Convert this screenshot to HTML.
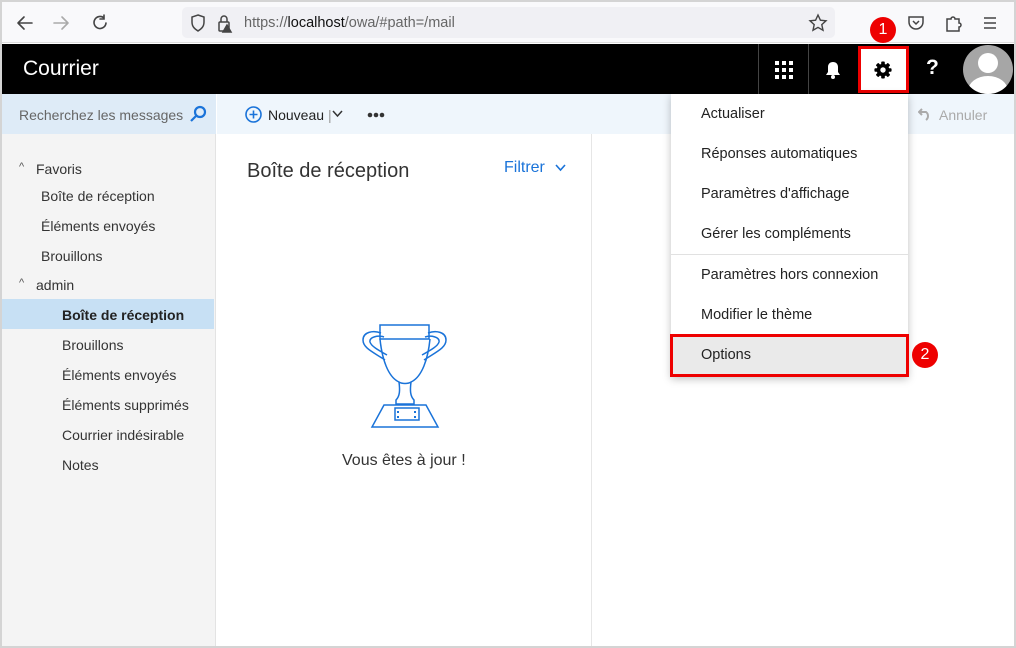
<!DOCTYPE html>
<html><head><meta charset="utf-8"><style>
*{margin:0;padding:0;box-sizing:border-box}
body{width:1016px;height:648px;overflow:hidden;background:#fff;font-family:"Liberation Sans",sans-serif;position:relative}
.a{position:absolute}
.t{font-size:14px;color:#333;white-space:nowrap}
.mi{position:absolute;left:701px;font-size:14.5px;color:#222;white-space:nowrap}
</style></head><body>
<div class="a" style="left:0;top:0;width:1016px;height:648px;border:2px solid #d4d4d4;border-top:none;z-index:20;pointer-events:none"></div>
<div class="a" style="left:0;top:0;width:1016px;height:43px;background:#f9f9fb;border-bottom:1px solid #ddd"></div>
<div class="a" style="left:0;top:0;width:1016px;height:2px;background:#d4d4d4"></div>
<svg class="a" style="left:14px;top:13px" width="100" height="20" viewBox="0 0 100 20" fill="none" stroke-width="1.6" stroke-linecap="round">
<path d="M4 10h14M4 10l6-6M4 10l6 6" stroke="#444"/>
<path d="M40 10h14M54 10l-6-6M54 10l-6 6" stroke="#aaa"/>
<path d="M90 5a6 6 0 1 0 2 5M90 2v4h-4" stroke="#444"/>
</svg>
<div class="a" style="left:182px;top:7px;width:653px;height:31px;background:#f0f0f4;border-radius:5px"></div>
<svg class="a" style="left:189px;top:13px" width="50" height="20" viewBox="0 0 50 20" fill="none" stroke="#444" stroke-width="1.5">
<path d="M9 2l6 2v5c0 5-3 7-6 9-3-2-6-4-6-9V4z"/>
<rect x="30" y="9" width="10" height="9" rx="1"/><path d="M32 9V6a3 3 0 0 1 6 0v3"/>
<path d="M38 12l4 7h-8z" fill="#444"/>
</svg>
<div class="a" style="left:244px;top:15px;font-size:14.5px;color:#666">https://<span style="color:#111">localhost</span>/owa/#path=/mail</div>
<svg class="a" style="left:808px;top:13px" width="20" height="20" viewBox="0 0 20 20" fill="none" stroke="#444" stroke-width="1.4"><path d="M10 2l2.4 5.2 5.6.6-4.2 3.8 1.2 5.6L10 14.4l-5 2.8 1.2-5.6L2 7.8l5.6-.6z"/></svg>
<svg class="a" style="left:907px;top:13px" width="95" height="20" viewBox="0 0 95 20" fill="none" stroke="#444" stroke-width="1.5">
<path d="M2 4h14v5a7 7 0 0 1-14 0z"/><path d="M6 8l3 3 3-3"/>
<path d="M40 6h4a2 2 0 1 1 4 0h4v4a2 2 0 1 1 0 4v4H40z"/>
<path d="M77 5h12M77 10h12M77 15h12"/>
</svg>
<div class="a" style="left:870px;top:17px;width:26px;height:26px;border-radius:50%;background:#e00;color:#fff;font-size:16px;text-align:center;line-height:26px;z-index:5">1</div>
<div class="a" style="left:0;top:44px;width:1016px;height:50px;background:#000"></div>
<div class="a" style="left:23px;top:57px;font-size:21px;color:#fff">Courrier</div>
<div class="a" style="left:758px;top:44px;width:1px;height:50px;background:#444"></div>
<div class="a" style="left:808px;top:44px;width:1px;height:50px;background:#444"></div>
<svg class="a" style="left:775px;top:61px" width="18" height="18" viewBox="0 0 18 18" fill="#fff"><rect x="0" y="0" width="4" height="4"/><rect x="7" y="0" width="4" height="4"/><rect x="14" y="0" width="4" height="4"/><rect x="0" y="7" width="4" height="4"/><rect x="7" y="7" width="4" height="4"/><rect x="14" y="7" width="4" height="4"/><rect x="0" y="14" width="4" height="4"/><rect x="7" y="14" width="4" height="4"/><rect x="14" y="14" width="4" height="4"/></svg>
<svg class="a" style="left:825px;top:61px" width="16" height="18" viewBox="0 0 16 18" fill="#fff"><path d="M8 1c-3 0-5 2-5 5v5l-2 3h14l-2-3V6c0-3-2-5-5-5z"/><circle cx="8" cy="16" r="2"/></svg>
<div class="a" style="left:858px;top:46px;width:51px;height:47px;background:#fff;border:3px solid #e00"></div>
<svg class="a" style="left:874px;top:61px" width="18" height="18" viewBox="0 0 20 20"><g fill="#000"><circle cx="10" cy="10" r="7"/><rect x="8" y="0.5" width="4" height="19" rx="1"/><rect x="0.5" y="8" width="19" height="4" rx="1"/><rect x="8" y="0.5" width="4" height="19" rx="1" transform="rotate(45 10 10)"/><rect x="8" y="0.5" width="4" height="19" rx="1" transform="rotate(-45 10 10)"/></g><circle cx="10" cy="10" r="3" fill="#fff"/></svg>
<div class="a" style="left:926px;top:56px;font-size:21px;font-weight:bold;color:#fff">?</div>
<div class="a" style="left:963px;top:45px;width:50px;height:49px;border-radius:50%;background:#a6a6a6;overflow:hidden">
<div class="a" style="left:15px;top:8px;width:20px;height:20px;border-radius:50%;background:#fff"></div>
<div class="a" style="left:5px;top:31px;width:40px;height:30px;border-radius:50% 50% 0 0;background:#fff"></div></div>
<div class="a" style="left:0;top:94px;width:216px;height:554px;background:#f4f4f4;border-right:1px solid #e3e3e3"></div>
<div class="a" style="left:0;top:94px;width:216px;height:40px;background:#deebf7"></div>
<div class="a t" style="left:19px;top:107px;color:#666;width:166px;overflow:hidden">Recherchez les messages ...</div>
<svg class="a" style="left:189px;top:105px" width="18" height="18" viewBox="0 0 18 18" fill="none" stroke="#1a73d9" stroke-width="2.2"><circle cx="11" cy="7" r="5"/><path d="M7.5 10.5L2 16"/></svg>
<div class="a t" style="left:19px;top:161px;font-size:11px;color:#555">^</div>
<div class="a t" style="left:36px;top:161px">Favoris</div>
<div class="a t" style="left:41px;top:188px">Boîte de réception</div>
<div class="a t" style="left:41px;top:218px">Éléments envoyés</div>
<div class="a t" style="left:41px;top:248px">Brouillons</div>
<div class="a t" style="left:19px;top:277px;font-size:11px;color:#555">^</div>
<div class="a t" style="left:36px;top:277px">admin</div>
<div class="a" style="left:2px;top:299px;width:212px;height:30px;background:#c7e0f4"></div>
<div class="a t" style="left:62px;top:307px;font-weight:bold;color:#222">Boîte de réception</div>
<div class="a t" style="left:62px;top:337px">Brouillons</div>
<div class="a t" style="left:62px;top:367px">Éléments envoyés</div>
<div class="a t" style="left:62px;top:397px">Éléments supprimés</div>
<div class="a t" style="left:62px;top:427px">Courrier indésirable</div>
<div class="a t" style="left:62px;top:457px">Notes</div>
<div class="a" style="left:217px;top:94px;width:797px;height:40px;background:#eff6fc"></div>
<svg class="a" style="left:245px;top:106px" width="17" height="17" viewBox="0 0 17 17" fill="none" stroke="#1a73d9" stroke-width="1.6"><circle cx="8.5" cy="8.5" r="7.5"/><path d="M8.5 4.5v8M4.5 8.5h8"/></svg>
<div class="a t" style="left:268px;top:107px;color:#222">Nouveau <span style="color:#999">|</span></div>
<svg class="a" style="left:332px;top:110px" width="11" height="8" viewBox="0 0 11 8" fill="none" stroke="#333" stroke-width="1.5"><path d="M1 1l4.5 5 4.5-5"/></svg>
<svg class="a" style="left:367px;top:112px" width="18" height="6" viewBox="0 0 18 6" fill="#333"><circle cx="3" cy="3" r="2.3"/><circle cx="9" cy="3" r="2.3"/><circle cx="15" cy="3" r="2.3"/></svg>
<svg class="a" style="left:918px;top:107px" width="15" height="14" viewBox="0 0 15 14" fill="none" stroke="#aaa" stroke-width="2"><path d="M4 2L1 5l3 3M1 5h7a5 5 0 0 1 0 8"/></svg>
<div class="a t" style="left:939px;top:107px;color:#aaa">Annuler</div>
<div class="a" style="left:591px;top:134px;width:1px;height:514px;background:#e6e6e6"></div>
<div class="a" style="left:247px;top:160px;font-size:20px;color:#333">Boîte de réception</div>
<div class="a" style="left:504px;top:159px;font-size:16px;color:#1a73d9">Filtrer</div>
<svg class="a" style="left:555px;top:164px" width="11" height="8" viewBox="0 0 11 8" fill="none" stroke="#1a73d9" stroke-width="1.6"><path d="M1 1l4.5 5 4.5-5"/></svg>
<svg class="a" style="left:340px;top:310px" width="130" height="130" viewBox="0 0 130 130" fill="none" stroke="#1a73d9" stroke-width="1.5">
<rect x="40" y="15" width="49" height="14"/>
<path d="M40 29c2 20 8 38 19 43 3 2 9 2 12 0 11-5 17-23 19-43"/>
<path d="M41 23c-8-3-18-1-18 7 0 8 10 12 22 20M88 23c8-3 18-1 18 7 0 8-10 12-22 20"/>
<path d="M44 27c-6-2-15 0-14 5 1 4 8 8 17 13M85 27c6-2 15 0 14 5-1 4-8 8-17 13"/>
<path d="M59 72c1 8 1 14-3 18v4h18v-4c-4-4-4-10-3-18"/>
<path d="M44 95h42l12 22H32z"/>
<rect x="55" y="98" width="24" height="12"/>
<g fill="#1a73d9" stroke="none"><rect x="57" y="101" width="2" height="2"/><rect x="57" y="106" width="2" height="2"/><rect x="74" y="101" width="2" height="2"/><rect x="74" y="106" width="2" height="2"/></g>
</svg>
<div class="a" style="left:342px;top:452px;font-size:16px;color:#333">Vous êtes à jour !</div>
<div class="a" style="left:671px;top:94px;width:237px;height:283px;background:#fff;box-shadow:0 2px 8px rgba(0,0,0,.25)"></div>
<div class="mi" style="top:106px">Actualiser</div>
<div class="mi" style="top:146px">Réponses automatiques</div>
<div class="mi" style="top:186px">Paramètres d'affichage</div>
<div class="mi" style="top:226px">Gérer les compléments</div>
<div class="a" style="left:671px;top:254px;width:237px;height:1px;background:#e1e1e1"></div>
<div class="mi" style="top:267px">Paramètres hors connexion</div>
<div class="mi" style="top:307px">Modifier le thème</div>
<div class="a" style="left:670px;top:334px;width:239px;height:43px;background:#eaeaea;border:3px solid #e00"></div>
<div class="mi" style="top:347px">Options</div>
<div class="a" style="left:912px;top:342px;width:26px;height:26px;border-radius:50%;background:#e00;color:#fff;font-size:16px;text-align:center;line-height:26px">2</div>
</body></html>
